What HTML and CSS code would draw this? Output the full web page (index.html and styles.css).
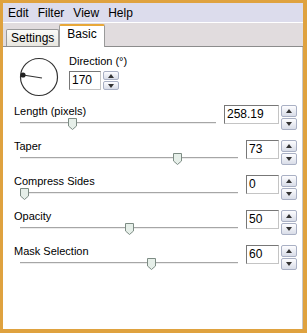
FILE: index.html
```html
<!DOCTYPE html>
<html>
<head>
  <meta charset="UTF-8">
  <title>Motion Blur</title>
  <link rel="stylesheet" href="styles.css">
</head>
<body>
  <div class="window">
    <!-- menu -->
    <div class="menubar">
      <span class="menu-item">Edit</span>
      <span class="menu-item">Filter</span>
      <span class="menu-item">View</span>
      <span class="menu-item">Help</span>
    </div>

    <!-- tabs -->
    <div class="tabstrip">
      <div class="tab">Settings</div>
      <div class="tab tab-active">Basic</div>
    </div>

    <div class="panel">
      <div class="direction">
        <svg class="dial" width="42" height="42" viewBox="0 0 42 42">
          <circle cx="21" cy="21" r="18.5" fill="none" stroke="#333" stroke-width="1.2"/>
          <line x1="5" y1="19" x2="24" y2="22" stroke="#333" stroke-width="1.2"/>
          <circle cx="5" cy="19" r="2.6" fill="#222"/>
        </svg>
        <div class="dir-field">
          <div class="label">Direction (°)</div>
          <div class="spinbox">
            <div class="numbox numbox-dir">170</div>
            <div class="spin"><span class="spin-btn up"></span><span class="spin-btn down"></span></div>
          </div>
        </div>
      </div>

      <div class="param">
        <div class="param-main">
          <div class="label">Length (pixels)</div>
          <div class="slider">
            <div class="track"></div>
            <svg class="thumb" style="left: calc((100% - 9px) * 0.258)" width="9" height="12" viewBox="0 0 9 12"><polygon points="0.5,0.5 8.5,0.5 8.5,8 4.5,11.5 0.5,8" fill="#e6efe9" stroke="#7d8c84"/></svg>
          </div>
        </div>
        <div class="spinbox">
          <div class="numbox numbox-wide">258.19</div>
          <div class="spin"><span class="spin-btn up"></span><span class="spin-btn down"></span></div>
        </div>
      </div>

      <div class="param">
        <div class="param-main">
          <div class="label">Taper</div>
          <div class="slider">
            <div class="track"></div>
            <svg class="thumb" style="left: calc((100% - 9px) * 0.73)" width="9" height="12" viewBox="0 0 9 12"><polygon points="0.5,0.5 8.5,0.5 8.5,8 4.5,11.5 0.5,8" fill="#e6efe9" stroke="#7d8c84"/></svg>
          </div>
        </div>
        <div class="spinbox">
          <div class="numbox">73</div>
          <div class="spin"><span class="spin-btn up"></span><span class="spin-btn down"></span></div>
        </div>
      </div>

      <div class="param">
        <div class="param-main">
          <div class="label">Compress Sides</div>
          <div class="slider">
            <div class="track"></div>
            <svg class="thumb" style="left: 0" width="9" height="12" viewBox="0 0 9 12"><polygon points="0.5,0.5 8.5,0.5 8.5,8 4.5,11.5 0.5,8" fill="#e6efe9" stroke="#7d8c84"/></svg>
          </div>
        </div>
        <div class="spinbox">
          <div class="numbox">0</div>
          <div class="spin"><span class="spin-btn up"></span><span class="spin-btn down"></span></div>
        </div>
      </div>

      <div class="param">
        <div class="param-main">
          <div class="label">Opacity</div>
          <div class="slider">
            <div class="track"></div>
            <svg class="thumb" style="left: calc((100% - 9px) * 0.5)" width="9" height="12" viewBox="0 0 9 12"><polygon points="0.5,0.5 8.5,0.5 8.5,8 4.5,11.5 0.5,8" fill="#e6efe9" stroke="#7d8c84"/></svg>
          </div>
        </div>
        <div class="spinbox">
          <div class="numbox">50</div>
          <div class="spin"><span class="spin-btn up"></span><span class="spin-btn down"></span></div>
        </div>
      </div>

      <div class="param">
        <div class="param-main">
          <div class="label">Mask Selection</div>
          <div class="slider">
            <div class="track"></div>
            <svg class="thumb" style="left: calc((100% - 9px) * 0.61)" width="9" height="12" viewBox="0 0 9 12"><polygon points="0.5,0.5 8.5,0.5 8.5,8 4.5,11.5 0.5,8" fill="#e6efe9" stroke="#7d8c84"/></svg>
          </div>
        </div>
        <div class="spinbox">
          <div class="numbox">60</div>
          <div class="spin"><span class="spin-btn up"></span><span class="spin-btn down"></span></div>
        </div>
      </div>
    </div>
  </div>
</body>
</html>
```

FILE: styles.css
```css
html, body {
  margin: 0;
  padding: 0;
}
body {
  font-family: "Liberation Sans", Arial, sans-serif;
  font-size: 11px;
  color: #000;
}
.window {
  width: 307px;
  height: 333px;
  box-sizing: border-box;
  border-style: solid;
  border-color: #dfa23f;
  border-width: 3px 4px 4px 3px;
  display: flex;
  flex-direction: column;
  background: #fff;
}
.menubar {
  height: 19px;
  background: #dcdcec;
  display: flex;
  align-items: center;
  padding-left: 2px;
  font-size: 12px;
  border-bottom: 1px solid #fff;
}
.menu-item {
  padding: 0 3px;
  margin-right: 3px;
}
.tabstrip {
  height: 23px;
  background: #e1dcde;
  display: flex;
  align-items: flex-end;
  padding-left: 3px;
  border-bottom: 1px solid #8c8c8c;
}
.tab {
  height: 16px;
  line-height: 16px;
  padding: 0 4px;
  font-size: 12px;
  background: linear-gradient(#fbfbf8, #e8e6df);
  border: 1px solid #9a9a9a;
  border-bottom: none;
  border-radius: 2px 2px 0 0;
}
.tab-active {
  height: 21px;
  line-height: 17px;
  padding: 0 7px;
  background: #fff;
  border-top: 2px solid #e8a83a;
  margin-bottom: -1px;
}
.panel {
  flex: 1;
  padding: 8px 5px 0 11px;
  border-right: 1px solid #c8c8c8;
}
.direction {
  display: flex;
  align-items: flex-start;
  gap: 9px;
  margin-bottom: 7px;
}
.dial {
  margin-left: 4px;
  margin-top: 1px;
}
.label {
  height: 13px;
  line-height: 13px;
  white-space: nowrap;
}
.dir-field .label {
  margin-bottom: 3px;
}
.spinbox {
  display: flex;
  gap: 2px;
}
.numbox {
  width: 29px;
  height: 17px;
  line-height: 17px;
  padding-left: 2px;
  font-size: 12px;
  border-style: solid;
  border-width: 1px;
  border-color: #777 #c4c4c4 #c4c4c4 #777;
}
.numbox-dir {
  width: 28px;
}
.numbox-wide {
  width: 51px;
}
.spin {
  width: 16px;
  display: flex;
  flex-direction: column;
  gap: 1px;
}
.spin-btn {
  flex: 1;
  border: 1px solid #a9b0c4;
  border-radius: 2px;
  background: linear-gradient(#fdfdff, #d9dde8);
  display: flex;
  align-items: center;
  justify-content: center;
}
.spin-btn::after {
  content: "";
  border-left: 3px solid transparent;
  border-right: 3px solid transparent;
}
.up::after {
  border-bottom: 4px solid #333;
}
.down::after {
  border-top: 4px solid #333;
}
.param {
  display: grid;
  grid-template-columns: 1fr auto;
  column-gap: 8px;
  margin-bottom: 10px;
}
.slider {
  position: relative;
  height: 12px;
  margin-left: 6px;
}
.track {
  position: absolute;
  left: 0;
  right: 0;
  top: 4px;
  border-top: 1px solid #a6a6a6;
  border-bottom: 1px solid #ececec;
}
.thumb {
  position: absolute;
  top: 0;
}
```
